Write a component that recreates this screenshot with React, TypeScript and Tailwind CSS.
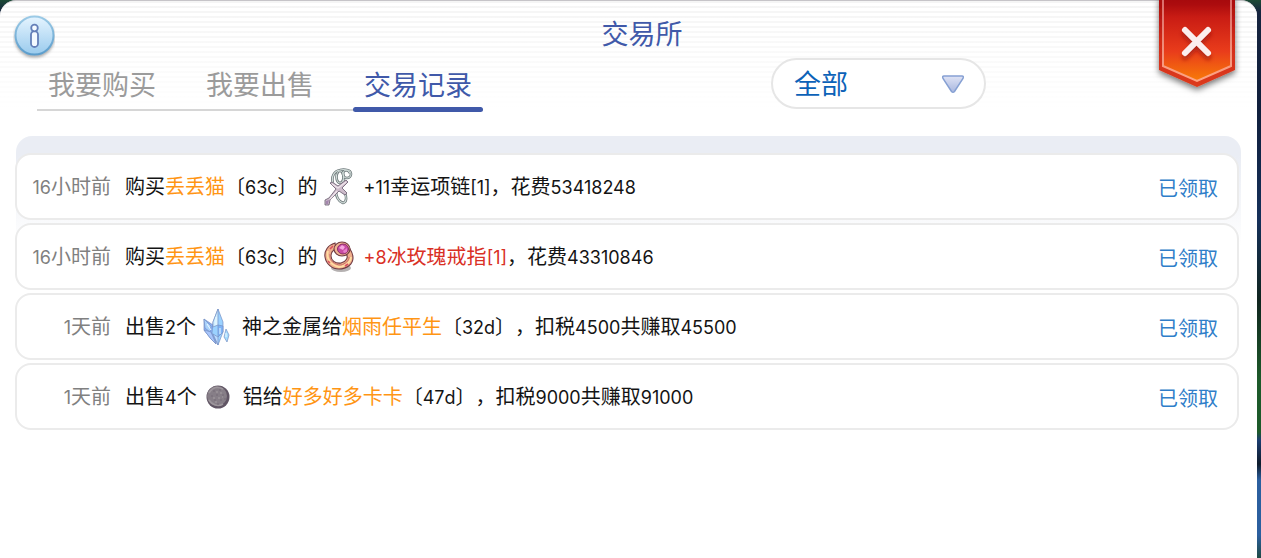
import React, { useState } from 'react';

type ItemKind = 'necklace' | 'ring' | 'crystal' | 'ore';
type Tone = 'plain' | 'player' | 'rare';

interface Part {
  text: string;
  tone?: Tone;
}

interface TradeRecord {
  id: number;
  time: string;
  before: Part[];
  item: ItemKind;
  after: Part[];
}

const tabs = ['我要购买', '我要出售', '交易记录'];

const records: TradeRecord[] = [
  {
    id: 1,
    time: '16小时前',
    before: [{ text: '购买' }, { text: '丢丢猫', tone: 'player' }, { text: '〔63c〕的' }],
    item: 'necklace',
    after: [{ text: '+11幸运项链[1]，花费53418248' }],
  },
  {
    id: 2,
    time: '16小时前',
    before: [{ text: '购买' }, { text: '丢丢猫', tone: 'player' }, { text: '〔63c〕的' }],
    item: 'ring',
    after: [{ text: '+8冰玫瑰戒指[1]', tone: 'rare' }, { text: '，花费43310846' }],
  },
  {
    id: 3,
    time: '1天前',
    before: [{ text: '出售2个' }],
    item: 'crystal',
    after: [{ text: '神之金属给' }, { text: '烟雨任平生', tone: 'player' }, { text: '〔32d〕，扣税4500共赚取45500' }],
  },
  {
    id: 4,
    time: '1天前',
    before: [{ text: '出售4个' }],
    item: 'ore',
    after: [{ text: '铝给' }, { text: '好多好多卡卡', tone: 'player' }, { text: '〔47d〕，扣税9000共赚取91000' }],
  },
];

const toneClass: Record<Tone, string> = {
  plain: 'text-[#141414]',
  player: 'text-[#ff9514]',
  rare: 'text-[#d93025]',
};

// Latin letters and digits are set one step smaller than the Chinese text
const Mixed: React.FC<{ text: string }> = ({ text }) => (
  <>
    {text.split(/([0-9a-z+[\]]+)/i).map((run, i) =>
      i % 2 === 1 ? (
        <span key={i} className="font-['Inter',sans-serif] text-[18px]">{run}</span>
      ) : (
        run
      )
    )}
  </>
);

const Parts: React.FC<{ parts: Part[] }> = ({ parts }) => (
  <>
    {parts.map((part, i) => (
      <span key={i} className={toneClass[part.tone ?? 'plain']}>
        <Mixed text={part.text} />
      </span>
    ))}
  </>
);

const ItemIcon: React.FC<{ kind: ItemKind }> = ({ kind }) => {
  if (kind === 'necklace') {
    return (
      <svg viewBox="0 0 30 38" className="h-[38px] w-[30px]" aria-hidden="true">
        <g fill="none" stroke="#6b7678" strokeWidth="2.6">
          <path d="M9 15C7 9 10 3 16 2C20 1 24 2 26 5" />
          <ellipse cx="16" cy="9" rx="3.5" ry="6" />
          <circle cx="23" cy="6" r="4" />
          <path d="M20 11 19 15M12 23C12 28 14 33 19 35C23 34 23 28 20 24" />
        </g>
        <g fill="none" stroke="#d3dedb" strokeWidth="1.1">
          <path d="M9 15C7 9 10 3 16 2C20 1 24 2 26 5" />
          <ellipse cx="16" cy="9" rx="3.5" ry="6" />
          <circle cx="23" cy="6" r="4" />
          <path d="M20 11 19 15M12 23C12 28 14 33 19 35C23 34 23 28 20 24" />
        </g>
        <path d="M6 15 8 14 14 18 22 12 24 14 18 20 23 25 21 27 15 23 6 32 5 37 1 37 1 32 5 30 12 21Z" fill="#cdbccb" stroke="#75697a" strokeWidth=".9" />
        <path d="M8 16 14 20 22 14M13 23 6 31" fill="none" stroke="#efe5eb" strokeWidth="1.3" />
        <path d="M2 33 5 32 4 36 2 36Z" fill="#a486ae" />
      </svg>
    );
  }
  if (kind === 'ring') {
    return (
      <svg viewBox="0 0 30 32" className="h-8 w-[30px]" aria-hidden="true">
        <ellipse cx="17" cy="27" rx="10" ry="4" fill="#b5b1b1" />
        <path d="M11 2C4 4 0 10 1 16C2 23 8 28 15 28C23 28 29 23 29 17C29 14 28 11 26 8L22 13C25 16 22 21 17 22C11 23 7 19 7 15C7 11 9 9 12 8Z" fill="#efad8c" stroke="#713b42" strokeWidth="1.1" />
        <path d="M4 10C2 17 6 24 15 26C22 25 27 21 27 16" fill="none" stroke="#ffdda2" strokeWidth="1.8" />
        <path d="M6 13C5 20 11 24 17 24C21 23 25 20 25 16" fill="none" stroke="#c77067" />
        <path d="M6 8 9 5M4 20 6 22M21 25 24 23" stroke="#d84e60" strokeWidth="1.6" />
        <ellipse cx="18" cy="8" rx="8" ry="7" fill="#efb592" stroke="#713b42" strokeWidth="1.1" />
        <ellipse cx="19" cy="8" rx="5.5" ry="5" fill="#c84ba4" stroke="#8b2d66" />
        <path d="M15 7 18 4 21 6 19 9Z" fill="#f5a6df" />
        <path d="M19 10 23 7 23 11 20 12Z" fill="#e77fcb" />
      </svg>
    );
  }
  if (kind === 'crystal') {
    return (
      <svg viewBox="0 0 28 38" className="h-[38px] w-7" aria-hidden="true">
        <g stroke="#7791c4" strokeWidth=".7" strokeLinejoin="round">
          <path d="M1 11 10 17 13 36 8 31 1 22Z" fill="#86aef4" />
          <path d="M1 11 8 18 7 24 2 20Z" fill="#a9d2fb" />
          <path d="M1 22 8 24 13 36 8 31Z" fill="#a9c6fb" />
          <path d="M15 1 20 14 20 24 15 37 9 25 10 14Z" fill="#9bd2ff" />
          <path d="M15 1 15 17 10 19 10 14Z" fill="#d0efff" />
          <path d="M15 17 20 18 20 24 15 29Z" fill="#7eb4f7" />
          <path d="M10 26 15 29 15 37Z" fill="#bcdcff" />
          <path d="M23 21 26 27 24 34 21 29Z" fill="#a4dcff" />
        </g>
        <path d="M13 9V17M4 16 8 22M17 20V26M23 25V29" stroke="#eefaff" fill="none" />
      </svg>
    );
  }
  return (
    <svg viewBox="0 0 26 26" className="h-[26px] w-[26px]" aria-hidden="true">
      <circle cx="13" cy="13" r="11.5" fill="#605564" />
      <circle cx="12" cy="12" r="10" fill="#867e87" />
      <path d="M4 9C7 4 12 2 18 5M4 16C7 21 13 23 18 20" fill="none" stroke="#9d969c" strokeWidth="1.5" />
      <path d="M8 7h2M14 6h2M6 12h2M11 11h2M17 11h2M9 16h2M15 16h2M12 20h2M19 15h2" stroke="#756b76" />
      <path d="M11 8h2M15 9h2M8 14h2M13 14h2M17 13h1M10 18h2" stroke="#a59ea2" />
    </svg>
  );
};

const InfoIcon = () => (
  <svg viewBox="0 0 42 46" className="h-[46px] w-[42px]" aria-hidden="true">
    <defs>
      <linearGradient id="infoFill" x1="0" y1="0" x2="0" y2="1">
        <stop offset="0" stopColor="#e5f4ff" />
        <stop offset="1" stopColor="#9acbed" />
      </linearGradient>
      <linearGradient id="infoRim" x1="0" y1="0" x2="0" y2="1">
        <stop offset="0" stopColor="#9bcae6" />
        <stop offset="1" stopColor="#5b9dcc" />
      </linearGradient>
      <filter id="infoShadow" x="-20%" y="-20%" width="140%" height="150%">
        <feDropShadow dx="0" dy="2" stdDeviation="1.5" floodColor="#555" floodOpacity=".5" />
      </filter>
    </defs>
    <circle cx="21.5" cy="21.5" r="19" fill="url(#infoFill)" stroke="url(#infoRim)" strokeWidth="2" filter="url(#infoShadow)" />
    <g fill="#f4faff" stroke="#647fb8" strokeWidth="1.8">
      <rect x="18" y="17" width="7" height="16" rx="3.5" />
      <circle cx="21.5" cy="14" r="3.3" />
    </g>
  </svg>
);

const CloseRibbon = () => (
  <svg viewBox="0 0 90 100" className="h-[100px] w-[90px]" aria-hidden="true">
    <defs>
      <linearGradient id="ribbonFill" x1="0" y1="0" x2="0" y2="1">
        <stop offset="0" stopColor="#a3080c" />
        <stop offset=".1" stopColor="#ac0c0e" />
        <stop offset=".25" stopColor="#c91c14" />
        <stop offset=".65" stopColor="#e93c1b" />
        <stop offset="1" stopColor="#f87b08" />
      </linearGradient>
      <linearGradient id="ribbonEdge" x1="0" y1="0" x2="0" y2="1">
        <stop offset="0" stopColor="#a5080c" />
        <stop offset=".5" stopColor="#d32b19" />
        <stop offset="1" stopColor="#dc3b1c" />
      </linearGradient>
      <linearGradient id="ribbonLine" x1="0" y1="0" x2="0" y2="1">
        <stop offset="0" stopColor="#d8696a" />
        <stop offset="1" stopColor="#ffa584" />
      </linearGradient>
      <filter id="ribbonShadow" x="-20%" y="-20%" width="140%" height="150%">
        <feDropShadow dx="0" dy="3" stdDeviation="3" floodColor="#000" floodOpacity=".55" />
      </filter>
      <filter id="crossShadow" x="-30%" y="-30%" width="160%" height="180%">
        <feDropShadow dx="0" dy="4" stdDeviation="2" floodColor="#8a1008" floodOpacity=".6" />
      </filter>
    </defs>
    <path d="M7-4H83V70L45 87 7 70Z" fill="url(#ribbonEdge)" filter="url(#ribbonShadow)" />
    <path d="M11-4H79V66L45 81 11 66Z" fill="url(#ribbonFill)" stroke="url(#ribbonLine)" strokeWidth="2" />
    <path d="M33 30 56 53M56 30 33 53" stroke="#fbeeee" strokeWidth="6" strokeLinecap="round" filter="url(#crossShadow)" />
  </svg>
);

const FilterSelect = () => (
  <div className="relative h-[51px] w-[215px]">
    <select
      aria-label="筛选"
      className="h-full w-full appearance-none rounded-full border-2 border-[#e6e6e6] bg-white pr-14 pl-[21px] text-[27px] text-[#0c62b8] outline-none"
    >
      <option>全部</option>
      <option>购买</option>
      <option>出售</option>
    </select>
    <svg viewBox="0 0 24 20" className="pointer-events-none absolute top-4 right-[21px] h-5 w-6" aria-hidden="true">
      <defs>
        <linearGradient id="arrowFill" x1="0" y1="0" x2="0" y2="1">
          <stop offset="0" stopColor="#dfe3f5" />
          <stop offset="1" stopColor="#a9b7df" />
        </linearGradient>
      </defs>
      <path d="M3 2H21Q23 2 22 4.5L13.5 17.5Q12 19 10.5 17.5L2 4.5Q1 2 3 2Z" fill="url(#arrowFill)" stroke="#86a0d3" strokeWidth="1.5" />
    </svg>
  </div>
);

const RecordRow: React.FC<{ record: TradeRecord }> = ({ record }) => (
  <li className="flex h-[67px] items-center rounded-2xl border-2 border-[#ebebeb] bg-white pr-[19px] text-[20px] leading-[30px] whitespace-nowrap">
    <time className="w-[94px] text-right text-[#808080]">
      <Mixed text={record.time} />
    </time>
    <div className="ml-[14px] flex flex-1 items-center">
      <p><Parts parts={record.before} /></p>
      <span className="mr-1 flex w-[42px] justify-center">
        <ItemIcon kind={record.item} />
      </span>
      <p><Parts parts={record.after} /></p>
    </div>
    <span className="pt-[3px] text-[#2f7ec9]">已领取</span>
  </li>
);

export default function App() {
  const [active, setActive] = useState(2);

  return (
    <div className="min-h-screen bg-[linear-gradient(#1c4a35_0,#16243f_12px,#101f3c_110px,#15305a_220px,#10251f_300px,#1d5a2a_380px,#1d5a2a_432px,#1c3d70_440px,#0f1c2c_464px,#2b5f9f_480px,#2b5f9f_535px,#1f4a44_558px)] pr-1 font-['Noto_Sans_CJK_SC',sans-serif] [text-spacing-trim:space-all]">
      <main className="relative min-h-screen rounded-t-2xl border-t border-[#c6c4c8] bg-white bg-[linear-gradient(transparent,white_108px),repeating-linear-gradient(#f5f5f5_0_2px,#fff_2px_5px)]">
        <header>
          <div className="flex h-[57px] items-start pr-[28px] pl-[13px]">
            <button type="button" aria-label="说明" className="mt-[13px]">
              <InfoIcon />
            </button>
            <h1 className="flex-1 pt-3 text-center text-[27px] leading-10 text-[#4059a9]">交易所</h1>
          </div>
          <div className="flex items-start pl-[37px]">
            <nav className="flex h-[53px] gap-7 border-b-2 border-[#d6d6d6]">
              {tabs.map((tab, i) => (
                <button
                  key={tab}
                  type="button"
                  onClick={() => setActive(i)}
                  className={`relative w-[130px] text-center text-[27px] leading-10 ${i === active ? 'text-[#4059a9]' : 'text-[#9b9b9b]'}`}
                >
                  {tab}
                  {i === active && <span className="absolute inset-x-0 -bottom-[3px] h-[5px] rounded-full bg-[#4059a9]" />}
                </button>
              ))}
            </nav>
            <div className="ml-[288px]">
              <FilterSelect />
            </div>
          </div>
        </header>

        <section className="mt-[25px] mr-4 ml-4 rounded-t-2xl bg-[linear-gradient(#eaedf4_20px,#ffffff_110px)] pt-[17px]">
          <ul className="mr-[2px] -ml-px flex flex-col gap-[3px]">
            {records.map((record) => (
              <RecordRow key={record.id} record={record} />
            ))}
          </ul>
        </section>

        {/* Ribbon hangs over the top edge of the window */}
        <button type="button" aria-label="关闭" className="absolute -top-px right-[15px]">
          <CloseRibbon />
        </button>
      </main>
    </div>
  );
}
